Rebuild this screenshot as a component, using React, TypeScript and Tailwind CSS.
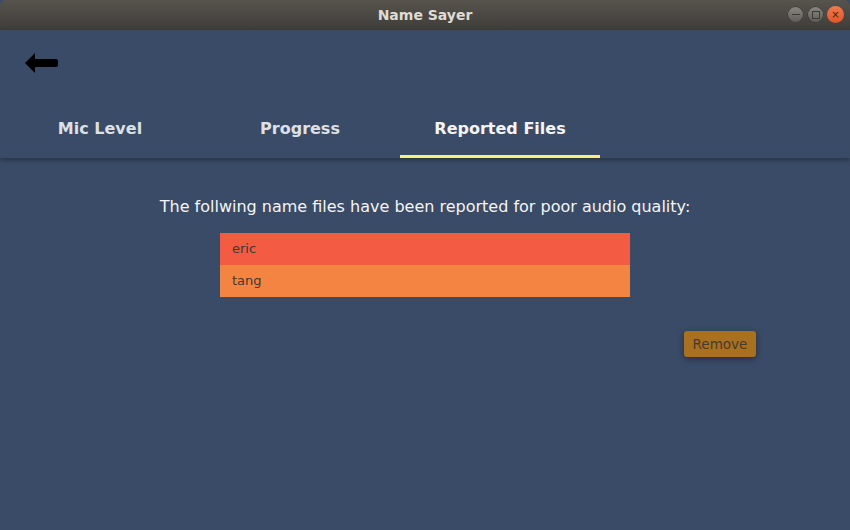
export default function App() {
  const files = [
    { name: "eric", bg: "bg-[#f35c42]" },
    { name: "tang", bg: "bg-[#f48442]" },
  ];

  return (
    <div className="flex h-[530px] w-[850px] flex-col overflow-hidden bg-[#3a4b67] font-['DejaVu_Sans',sans-serif]">
      {/* title bar */}
      <div className="relative flex h-[30px] shrink-0 items-center justify-center rounded-t-[6px] bg-gradient-to-b from-[#57544e] to-[#3f3d39]">
        <span className="text-[14px] font-bold text-[#dfdbd2]">Name Sayer</span>
        <div className="absolute right-[6px] top-[6px] flex gap-[3px]">
          <span className="flex h-[17px] w-[17px] items-center justify-center rounded-full bg-gradient-to-b from-[#8a8882] to-[#5e5c57] shadow-[inset_0_0_0_1px_#3b3a36]">
            <span className="h-[1.5px] w-[8px] bg-[#3b3a36]" />
          </span>
          <span className="flex h-[17px] w-[17px] items-center justify-center rounded-full bg-gradient-to-b from-[#8a8882] to-[#5e5c57] shadow-[inset_0_0_0_1px_#3b3a36]">
            <span className="h-[8px] w-[8px] border-[1.5px] border-[#3b3a36]" />
          </span>
          <span className="flex h-[17px] w-[17px] items-center justify-center rounded-full bg-gradient-to-b from-[#f07a4c] to-[#e0552a] text-[10px] leading-none text-[#4a2012]">
            ×
          </span>
        </div>
      </div>

      {/* header with back arrow + tabs */}
      <div className="relative z-10 flex h-[128px] shrink-0 flex-col bg-[#3a4b67] shadow-[0_2px_5px_rgba(0,0,0,0.35)]">
        <div className="h-[83px] pl-[25px] pt-[23px]">
          <svg width="34" height="22" viewBox="0 0 34 22">
            <path d="M0 10 L10 0 L10 6 L31 6 Q33 6 33 8 L33 12 Q33 14 31 14 L10 14 L10 20 Z" fill="#000" />
          </svg>
        </div>
        <div className="flex flex-1">
          {["Mic Level", "Progress", "Reported Files"].map((t, i) => (
            <div
              key={t}
              className={
                "flex w-[200px] items-start justify-center pt-[4px] text-[16px] font-bold " +
                (i === 2 ? "border-b-[3px] border-[#f6f07e] text-[#f4f4f4]" : "border-b-[3px] border-transparent text-[#dde0e6]")
              }
            >
              {t}
            </div>
          ))}
        </div>
      </div>

      {/* content */}
      <div className="flex flex-col items-center pt-[37px]">
        <p className="text-[16px] text-[#f4f4f4]">
          The follwing name files have been reported for poor audio quality:
        </p>
        <div className="mt-[14px] w-[410px]">
          {files.map((f) => (
            <div key={f.name} className={"flex h-[32px] items-center pl-[12px] text-[13px] text-[#3a3a3a] " + f.bg}>
              {f.name}
            </div>
          ))}
        </div>
      </div>
      <div className="flex justify-end pr-[94px] pt-[34px]">
        <button className="h-[26px] w-[72px] rounded-[3px] bg-[#a9701f] text-[13.5px] text-[#4a3a2e] shadow-[0_2px_6px_rgba(0,0,0,0.4)]">
          Remove
        </button>
      </div>
    </div>
  );
}
